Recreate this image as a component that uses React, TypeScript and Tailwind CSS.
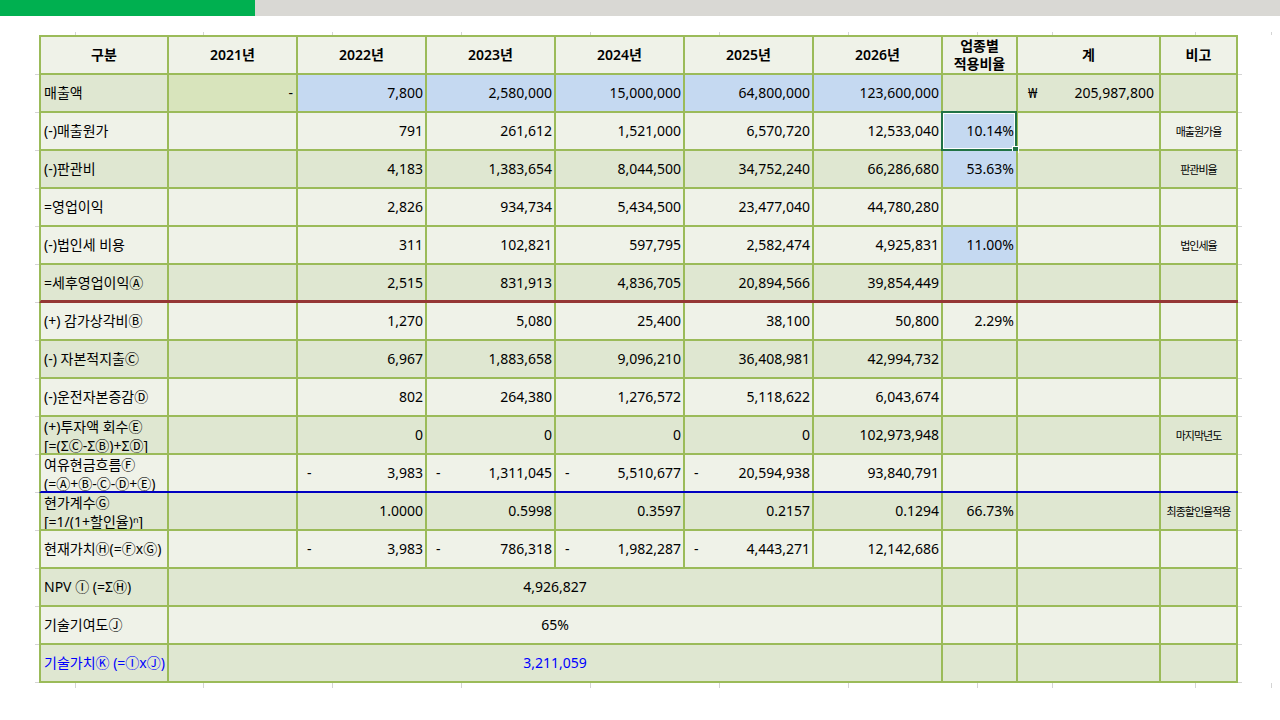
import React from "react";

// column widths, each includes its right border
const W = [
  "w-[128px]",
  "w-[129px]",
  "w-[129px]",
  "w-[129px]",
  "w-[129px]",
  "w-[129px]",
  "w-[129px]",
  "w-[75px]",
  "w-[143px]",
  "w-[77px]",
];

type RowT = {
  label: string | string[];
  dark?: boolean;
  c21?: string;
  c21Bg?: boolean;
  years?: string[];
  yearsBlue?: boolean;
  ratio?: string;
  ratioBlue?: boolean;
  selected?: boolean;
  total?: string;
  note?: string;
  merged?: string;
  line?: "red" | "blue";
  blue?: boolean;
};

const rows: RowT[] = [
  {
    label: "매출액",
    dark: true,
    c21: "-",
    c21Bg: true,
    years: ["7,800", "2,580,000", "15,000,000", "64,800,000", "123,600,000"],
    yearsBlue: true,
    total: "205,987,800",
  },
  {
    label: "(-)매출원가",
    years: ["791", "261,612", "1,521,000", "6,570,720", "12,533,040"],
    ratio: "10.14%",
    ratioBlue: true,
    selected: true,
    note: "매출원가율",
  },
  {
    label: "(-)판관비",
    dark: true,
    years: ["4,183", "1,383,654", "8,044,500", "34,752,240", "66,286,680"],
    ratio: "53.63%",
    ratioBlue: true,
    note: "판관비율",
  },
  {
    label: "=영업이익",
    years: ["2,826", "934,734", "5,434,500", "23,477,040", "44,780,280"],
  },
  {
    label: "(-)법인세 비용",
    years: ["311", "102,821", "597,795", "2,582,474", "4,925,831"],
    ratio: "11.00%",
    ratioBlue: true,
    note: "법인세율",
  },
  {
    label: "=세후영업이익Ⓐ",
    dark: true,
    years: ["2,515", "831,913", "4,836,705", "20,894,566", "39,854,449"],
    line: "red",
  },
  {
    label: "(+) 감가상각비Ⓑ",
    years: ["1,270", "5,080", "25,400", "38,100", "50,800"],
    ratio: "2.29%",
  },
  {
    label: "(-) 자본적지출Ⓒ",
    dark: true,
    years: ["6,967", "1,883,658", "9,096,210", "36,408,981", "42,994,732"],
  },
  {
    label: "(-)운전자본증감Ⓓ",
    years: ["802", "264,380", "1,276,572", "5,118,622", "6,043,674"],
  },
  {
    label: ["(+)투자액 회수Ⓔ", "[=(ΣⒸ-ΣⒷ)+ΣⒹ]"],
    dark: true,
    years: ["0", "0", "0", "0", "102,973,948"],
    note: "마지막년도",
  },
  {
    label: ["여유현금흐름Ⓕ", "(=Ⓐ+Ⓑ-Ⓒ-Ⓓ+Ⓔ)"],
    years: ["-3,983", "-1,311,045", "-5,510,677", "-20,594,938", "93,840,791"],
    line: "blue",
  },
  {
    label: ["현가계수Ⓖ", "[=1/(1+할인율)ⁿ]"],
    dark: true,
    years: ["1.0000", "0.5998", "0.3597", "0.2157", "0.1294"],
    ratio: "66.73%",
    note: "최종할인율적용",
  },
  {
    label: "현재가치Ⓗ(=ⒻxⒼ)",
    years: ["-3,983", "-786,318", "-1,982,287", "-4,443,271", "12,142,686"],
  },
  { label: "NPV Ⓘ (=ΣⒽ)", dark: true, merged: "4,926,827" },
  { label: "기술기여도Ⓙ", merged: "65%" },
  { label: "기술가치Ⓚ (=ⒾxⒿ)", dark: true, merged: "3,211,059", blue: true },
];

const cell = "shrink-0 h-full border-r-2 border-r-[#9bbb59] flex items-center overflow-hidden whitespace-nowrap";

function Num({ w, v, bg = "" }: { w: string; v: string; bg?: string }) {
  if (v.startsWith("-") && v.length > 1) {
    return (
      <div className={`${w} ${cell} ${bg} justify-between pl-[9px] pr-[2px]`}>
        <span>-</span>
        <span>{v.slice(1)}</span>
      </div>
    );
  }
  return <div className={`${w} ${cell} ${bg} justify-end pr-[2px]`}>{v}</div>;
}

function Tick() {
  return <div className="w-[4px] shrink-0 border-b border-b-[#d4d4d4]" />;
}

function TickStrip({ h }: { h: string }) {
  return (
    <div className={`flex ${h} ml-[40px]`}>
      {W.map((w, i) => (
        <div
          key={i}
          className={`${w} shrink-0 border-l border-l-[#d4d4d4] ${i === W.length - 1 ? "border-r border-r-[#d4d4d4]" : ""}`}
        />
      ))}
    </div>
  );
}

function DataRow({ r }: { r: RowT }) {
  const bottom =
    r.line === "red"
      ? "border-b-[3px] border-b-[#953735]"
      : r.line === "blue"
        ? "border-b-2 border-b-[#0000c0]"
        : "border-b-2 border-b-[#9bbb59]";
  const text = r.blue ? "text-[#0000ff]" : "text-black";
  return (
    <div className="flex">
      <Tick />
      <div
        className={`flex h-[38px] border-l-2 border-l-[#9bbb59] ${bottom} ${text} ${r.dark ? "bg-[#dfe7d1]" : "bg-[#eff2e8]"}`}
      >
        <div className={`${W[0]} ${cell} pl-[3px]`}>
          {Array.isArray(r.label) ? (
            <div className="flex flex-col leading-[19px] pt-[1px]">
              <span>{r.label[0]}</span>
              <span>{r.label[1]}</span>
            </div>
          ) : (
            r.label
          )}
        </div>

        {r.merged !== undefined ? (
          <div className={`w-[774px] ${cell} justify-center`}>{r.merged}</div>
        ) : (
          <>
            <div className={`${W[1]} ${cell} justify-end pr-[3px] ${r.c21Bg ? "bg-[#d8e4bc]" : ""}`}>
              {r.c21}
            </div>
            {(r.years ?? []).map((v, i) => (
              <Num key={i} w={W[i + 2]} v={v} bg={r.yearsBlue ? "bg-[#c5d9f1]" : ""} />
            ))}
          </>
        )}

        <div
          className={`${W[7]} ${cell} justify-end pr-[2px] relative !overflow-visible ${r.ratioBlue ? "bg-[#c5d9f1]" : ""}`}
        >
          {r.ratio}
          {r.selected && (
            <div className="absolute -left-[2px] -top-[2px] -right-[1px] -bottom-[2px] border-2 border-[#217346] shadow-[inset_0_0_0_1px_#ffffff]">
              <div className="absolute -right-[4px] -bottom-[4px] w-[7px] h-[7px] bg-[#217346] border border-white" />
            </div>
          )}
        </div>

        <div className={`${W[8]} ${cell} ${r.total ? "justify-between pl-[10px] pr-[5px]" : ""}`}>
          {r.total && (
            <>
              <span>₩</span>
              <span>{r.total}</span>
            </>
          )}
        </div>

        <div className={`${W[9]} ${cell} justify-center text-[11px] tracking-[-1px]`}>{r.note}</div>
      </div>
      <Tick />
    </div>
  );
}

export default function App() {
  const headers = ["구분", "2021년", "2022년", "2023년", "2024년", "2025년", "2026년"];
  return (
    <div className="min-h-[720px] bg-white font-['Noto_Sans','Noto_Sans_CJK_KR',sans-serif] text-[14px] leading-none">
      <div className="flex h-[16px]">
        <div className="w-[255px] bg-[#00b050]" />
        <div className="flex-1 bg-[#d9d8d4]" />
      </div>

      <div className="mt-[16px] pl-[35px]">
        <TickStrip h="h-[3px]" />

        {/* header */}
        <div className="flex">
          <Tick />
          <div className="flex h-[40px] border-l-2 border-t-2 border-b-2 border-[#9bbb59] bg-[#eff2e8] font-semibold text-black">
            {headers.map((h, i) => (
              <div key={h} className={`${W[i]} ${cell} justify-center`}>
                {h}
              </div>
            ))}
            <div className={`${W[7]} ${cell} flex-col !justify-center !items-center leading-[18px]`}>
              <span>업종별</span>
              <span>적용비율</span>
            </div>
            <div className={`${W[8]} ${cell} justify-center`}>계</div>
            <div className={`${W[9]} ${cell} justify-center`}>비고</div>
          </div>
          <Tick />
        </div>

        {rows.map((r, i) => (
          <DataRow key={i} r={r} />
        ))}

        <TickStrip h="h-[5px]" />
      </div>
    </div>
  );
}
